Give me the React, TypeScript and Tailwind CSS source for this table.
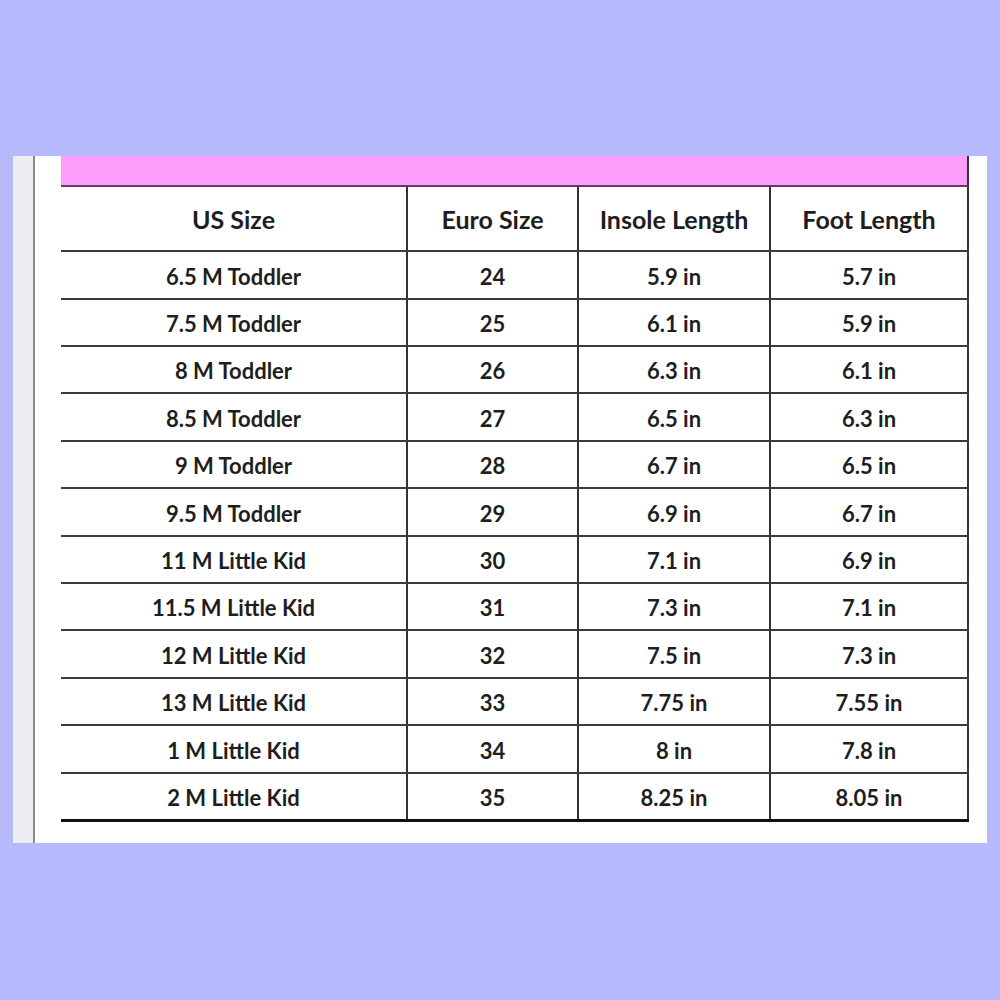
import React from "react";

const rows: [string, string, string, string][] = [
  ["6.5 M Toddler", "24", "5.9 in", "5.7 in"],
  ["7.5 M Toddler", "25", "6.1 in", "5.9 in"],
  ["8 M Toddler", "26", "6.3 in", "6.1 in"],
  ["8.5 M Toddler", "27", "6.5 in", "6.3 in"],
  ["9 M Toddler", "28", "6.7 in", "6.5 in"],
  ["9.5 M Toddler", "29", "6.9 in", "6.7 in"],
  ["11 M Little Kid", "30", "7.1 in", "6.9 in"],
  ["11.5 M Little Kid", "31", "7.3 in", "7.1 in"],
  ["12 M Little Kid", "32", "7.5 in", "7.3 in"],
  ["13 M Little Kid", "33", "7.75 in", "7.55 in"],
  ["1 M Little Kid", "34", "8 in", "7.8 in"],
  ["2 M Little Kid", "35", "8.25 in", "8.05 in"],
];

const tall = [true, false, false, true, false, true, false, false, true, false, true, false];

export default function App() {
  return (
    <div
      className="w-[1000px] h-[1000px] bg-[#b7b9fd] pt-[156px] pl-[13px]"
      style={{ fontFamily: "Lato, 'Open Sans', sans-serif" }}
    >
      <div className="w-[974px] h-[687px] bg-white flex">
        <div className="w-[20px] h-full bg-[#eceef1]" />
        <div className="w-[2px] h-full bg-[#8a8a8a]" />
        <div className="w-[26px] h-full bg-white" />
        <div className="w-[908px] flex flex-col">
          <div className="h-[31px] bg-[#fd9efd] border-b-2 border-b-[#5c3f5c] border-r-2 border-r-[#333]" />
          <div className="flex h-[65px] border-b-2 border-[#3c3c3c] text-[#1e1e1e] font-bold text-[25px]">
            <div className="w-[347px] pt-[3px] flex items-center justify-center border-r-2 border-[#333]">US Size</div>
            <div className="w-[171px] pt-[3px] flex items-center justify-center border-r-2 border-[#333]">Euro Size</div>
            <div className="w-[192px] pt-[3px] flex items-center justify-center border-r-2 border-[#333]">Insole Length</div>
            <div className="w-[198px] pt-[3px] flex items-center justify-center border-r-2 border-[#333]">Foot Length</div>
          </div>
          {rows.map((r, i) => (
            <div
              key={i}
              className={
                "flex text-[#1e1e1e] font-bold text-[22px] " +
                (i === rows.length - 1
                  ? "h-[48px] border-b-[3px] border-[#111]"
                  : tall[i]
                  ? "h-[48px] border-b-2 border-[#3c3c3c]"
                  : "h-[47px] border-b-2 border-[#3c3c3c]")
              }
            >
              <div className="w-[347px] pt-[2px] flex items-center justify-center border-r-2 border-[#333]">{r[0]}</div>
              <div className="w-[171px] pt-[2px] flex items-center justify-center border-r-2 border-[#333]">{r[1]}</div>
              <div className="w-[192px] pt-[2px] flex items-center justify-center border-r-2 border-[#333]">{r[2]}</div>
              <div className="w-[198px] pt-[2px] flex items-center justify-center border-r-2 border-[#333]">{r[3]}</div>
            </div>
          ))}
        </div>
      </div>
    </div>
  );
}
